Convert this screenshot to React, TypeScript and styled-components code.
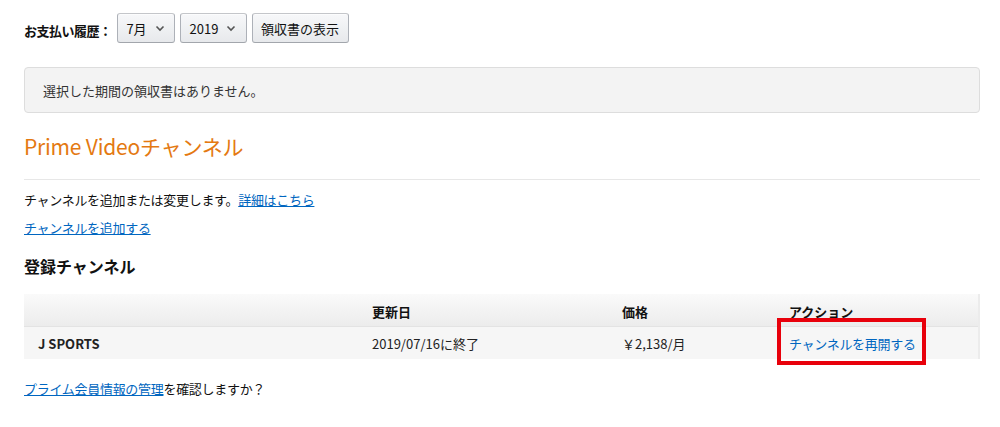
import React from "react";
import styled, { createGlobalStyle } from "styled-components";

const GlobalStyle = createGlobalStyle`
   html, body {
      margin: 0;
      padding: 0;
      background: #fff;
   }
   body {
      font-family: "Noto Sans CJK JP", "Noto Sans", sans-serif;
      font-size: 13px;
      color: #333;
   }
`;

const Page = styled.div`
   padding: 13px 20px 0 24px;
   display: flex;
   flex-direction: column;
`;

const HistoryRow = styled.div`
   display: flex;
   align-items: center;
   gap: 5px;
   height: 30px;
`;

const HistoryLabel = styled.span`
   font-weight: bold;
   font-size: 13px;
   color: #111;
   padding-top: 5px;
   letter-spacing: -0.5px;
   white-space: nowrap;
   flex: 0 0 87px;
`;

const GrayButton = styled.button<{ w: number }>`
   width: ${({ w }) => w}px;
   height: 30px;
   display: flex;
   align-items: center;
   justify-content: center;
   gap: 8px;
   padding: 0 4px;
   white-space: nowrap;
   font-family: inherit;
   font-size: 13px;
   color: #111;
   background: linear-gradient(to bottom, #f7f8fa, #e7e9ec);
   border: 1px solid #adb1b8;
   border-color: #c4c6ca #adb1b8 #a2a6ac;
   border-radius: 3px;
   box-shadow: 0 1px 0 rgba(255, 255, 255, 0.6) inset;
`;

const InfoBox = styled.div`
   margin-top: 24px;
   height: 46px;
   box-sizing: border-box;
   display: flex;
   align-items: center;
   padding: 0 18px;
   background: #f3f3f3;
   border: 1px solid #ddd;
   border-radius: 4px;
   color: #333;
`;

const SectionTitle = styled.h2`
   margin: 20px 0 0;
   font-size: 21px;
   line-height: 27px;
   font-weight: normal;
   color: #e47911;
   letter-spacing: -0.2px;
`;

const Divider = styled.hr`
   margin: 19px 0 0;
   border: 0;
   border-top: 1px solid #e7e7e7;
`;

const Para = styled.p<{ gap: number }>`
   margin: ${({ gap }) => gap}px 0 0;
   line-height: 18px;
   color: #111;
   letter-spacing: -0.3px;
`;

const Link = styled.a`
   color: #0066c0;
   text-decoration: underline;
   cursor: pointer;
`;

const SubTitle = styled.h3`
   margin: 18px 0 0;
   font-size: 16px;
   line-height: 22px;
   font-weight: bold;
   color: #111;
`;

const Table = styled.div`
   margin-top: 17px;
   display: grid;
   grid-template-columns: 334px 250px 167px 1fr;
   border-right: 2px solid #ececec;
`;

const HeadCell = styled.div`
   height: 33px;
   display: flex;
   align-items: flex-end;
   padding: 0 14px 5px;
   box-sizing: border-box;
   font-weight: bold;
   color: #111;
   background: linear-gradient(to bottom, #fafafa, #ececec);
   border-bottom: 1px solid #e3e3e3;
`;

const BodyCell = styled.div<{ bold?: boolean }>`
   position: relative;
   height: 32px;
   display: flex;
   align-items: center;
   padding: 0 14px;
   box-sizing: border-box;
   background: #f6f6f6;
   color: #222;
   font-weight: ${({ bold }) => (bold ? "bold" : "normal")};
`;

const ActionLink = styled.a`
   color: #0066c0;
   text-decoration: none;
   cursor: pointer;
   letter-spacing: -0.3px;
`;

const Highlight = styled.div`
   position: absolute;
   left: 2px;
   top: -9px;
   width: 149px;
   height: 47px;
   box-sizing: border-box;
   border: 4px solid #e8000b;
   pointer-events: none;
`;

const Chevron = () => (
   <svg width="10" height="7" viewBox="0 0 10 7">
      <path
         d="M1.5 1.5 L5 5 L8.5 1.5"
         fill="none"
         stroke="#555"
         strokeWidth="1.6"
      />
   </svg>
);

const App: React.FC = () => {
   return (
      <>
         <GlobalStyle />
         <Page>
            <HistoryRow>
               <HistoryLabel>お支払い履歴：</HistoryLabel>
               <GrayButton w={58}>
                  7月 <Chevron />
               </GrayButton>
               <GrayButton w={67}>
                  2019 <Chevron />
               </GrayButton>
               <GrayButton w={97}>領収書の表示</GrayButton>
            </HistoryRow>

            <InfoBox>選択した期間の領収書はありません。</InfoBox>

            <SectionTitle>Prime Videoチャンネル</SectionTitle>
            <Divider />

            <Para gap={11}>
               チャンネルを追加または変更します。<Link>詳細はこちら</Link>
            </Para>
            <Para gap={10}>
               <Link>チャンネルを追加する</Link>
            </Para>

            <SubTitle>登録チャンネル</SubTitle>

            <Table>
               <HeadCell />
               <HeadCell>更新日</HeadCell>
               <HeadCell>価格</HeadCell>
               <HeadCell>アクション</HeadCell>
               <BodyCell bold>J SPORTS</BodyCell>
               <BodyCell>2019/07/16に終了</BodyCell>
               <BodyCell>￥2,138/月</BodyCell>
               <BodyCell>
                  <ActionLink>チャンネルを再開する</ActionLink>
                  <Highlight />
               </BodyCell>
            </Table>

            <Para gap={21}>
               <Link>プライム会員情報の管理</Link>を確認しますか？
            </Para>
         </Page>
      </>
   );
};

export default App;
